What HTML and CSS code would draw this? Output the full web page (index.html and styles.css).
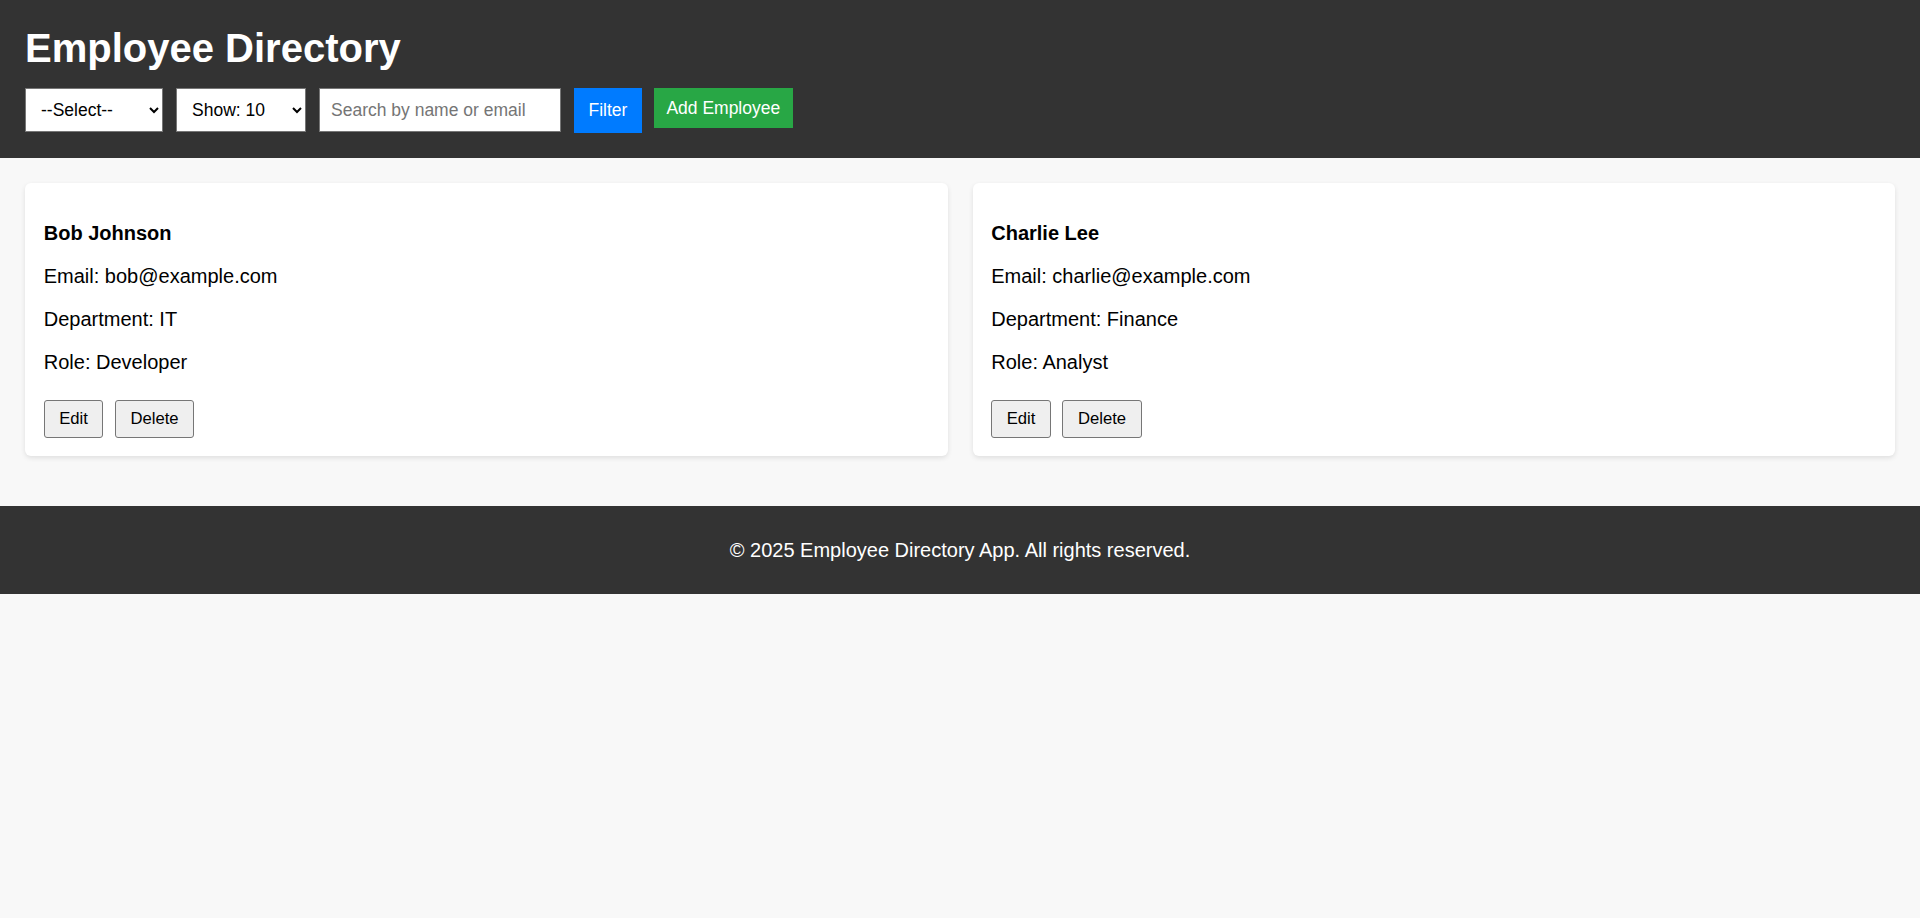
FILE: index.html
```html
<!DOCTYPE html>
<html lang="en">
<head>
<meta charset="utf-8">
<title>Employee Directory</title>
<link rel="stylesheet" href="styles.css">
</head>
<body>
<header class="site-header">
  <h1 class="title">Employee Directory</h1>
  <div class="controls">
    <select class="control select-dept">
      <option>--Select--</option>
      <option>IT</option>
      <option>Finance</option>
    </select>
    <select class="control select-show">
      <option>Show: 10</option>
      <option>Show: 20</option>
    </select>
    <input class="control search" type="text" placeholder="Search by name or email">
    <button class="btn-filter">Filter</button>
    <button class="btn-add">Add Employee</button>
  </div>
</header>
<main class="content">
  <div class="card">
    <p class="name">Bob Johnson</p>
    <p>Email: bob@example.com</p>
    <p>Department: IT</p>
    <p>Role: Developer</p>
    <div class="actions">
      <button class="btn">Edit</button>
      <button class="btn">Delete</button>
    </div>
  </div>
  <div class="card">
    <p class="name">Charlie Lee</p>
    <p>Email: charlie@example.com</p>
    <p>Department: Finance</p>
    <p>Role: Analyst</p>
    <div class="actions">
      <button class="btn">Edit</button>
      <button class="btn">Delete</button>
    </div>
  </div>
</main>
<footer class="site-footer">
  <p>© 2025 Employee Directory App. All rights reserved.</p>
</footer>
</body>
</html>
```

FILE: styles.css
```css
html, body {
  margin: 0;
  padding: 0;
}
body {
  background: #f8f8f8;
  font-family: "Liberation Sans", Arial, sans-serif;
  font-size: 20px;
  color: #000;
}
.site-header {
  background: #333;
  color: #fff;
  padding: 25px;
}
.title {
  margin: 0 0 17px;
  font-size: 40px;
  font-weight: bold;
  line-height: 46px;
}
.controls {
  display: flex;
  align-items: flex-start;
  gap: 13px;
}
.control {
  box-sizing: border-box;
  height: 44px;
  font-family: "Liberation Sans", Arial, sans-serif;
  font-size: 17.5px;
  color: #000;
  background: #fff;
  border: 1px solid #767676;
  border-radius: 0;
  margin: 0;
}
.select-dept {
  width: 138px;
  padding: 0 8px 0 11px;
}
.select-show {
  width: 130px;
  padding: 0 8px 0 11px;
}
.search {
  width: 242px;
  padding: 0 11px;
}
.search::placeholder {
  color: #757575;
}
.btn-filter {
  box-sizing: border-box;
  height: 45px;
  margin: 0;
  padding: 0 14.5px;
  background: #007bff;
  color: #fff;
  border: none;
  font-family: "Liberation Sans", Arial, sans-serif;
  font-size: 17.5px;
}
.btn-add {
  box-sizing: border-box;
  height: 40px;
  margin: 0 0 0 -1px;
  padding: 0 12.5px;
  background: #28a745;
  color: #fff;
  border: none;
  font-family: "Liberation Sans", Arial, sans-serif;
  font-size: 17.5px;
}
.content {
  display: grid;
  grid-template-columns: 1fr 1fr;
  gap: 25px;
  padding: 25px;
  align-items: start;
}
.card {
  background: #fff;
  border-radius: 6px;
  padding: 18.75px;
  box-shadow: 0 2px 5px rgba(0, 0, 0, 0.1);
}
.card p {
  margin: 20px 0;
  line-height: 23px;
}
.card .name {
  font-weight: bold;
}
.actions {
  display: flex;
  gap: 11.5px;
  padding-top: 6.25px;
}
.btn {
  box-sizing: border-box;
  height: 37.5px;
  padding: 0 14.5px;
  margin: 0;
  background: #efefef;
  border: 1px solid #767676;
  border-radius: 3px;
  font-family: "Liberation Sans", Arial, sans-serif;
  font-size: 16.67px;
  color: #000;
}
.site-footer {
  margin-top: 25px;
  background: #333;
  color: #fff;
  text-align: center;
  padding: 12.5px;
}
.site-footer p {
  margin: 20px 0;
  line-height: 23px;
}
```
